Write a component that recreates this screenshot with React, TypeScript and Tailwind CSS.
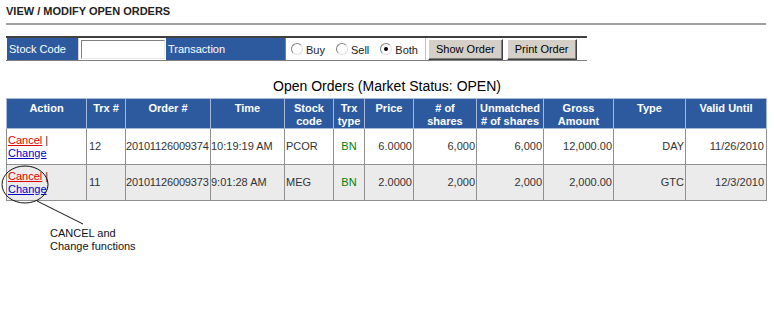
import React from 'react';

interface OrderRow {
  trx: string;
  order: string;
  time: string;
  stock: string;
  trxType: string;
  price: string;
  shares: string;
  unmatched: string;
  gross: string;
  type: string;
  validUntil: string;
}

const rows: OrderRow[] = [
  {
    trx: '12',
    order: '20101126009374',
    time: '10:19:19 AM',
    stock: 'PCOR',
    trxType: 'BN',
    price: '6.0000',
    shares: '6,000',
    unmatched: '6,000',
    gross: '12,000.00',
    type: 'DAY',
    validUntil: '11/26/2010',
  },
  {
    trx: '11',
    order: '20101126009373',
    time: '9:01:28 AM',
    stock: 'MEG',
    trxType: 'BN',
    price: '2.0000',
    shares: '2,000',
    unmatched: '2,000',
    gross: '2,000.00',
    type: 'GTC',
    validUntil: '12/3/2010',
  },
];

const headers: string[][] = [
  ['Action'],
  ['Trx #'],
  ['Order #'],
  ['Time'],
  ['Stock', 'code'],
  ['Trx', 'type'],
  ['Price'],
  ['# of', 'shares'],
  ['Unmatched', '# of shares'],
  ['Gross', 'Amount'],
  ['Type'],
  ['Valid Until'],
];

const colWidths = [80, 39, 85, 74, 49, 31, 49, 63, 67, 70, 72, 81];

const Radio = ({ label, checked }: { label: string; checked?: boolean }) => (
  <label className="flex items-center gap-[3px]">
    <span className="flex h-[12px] w-[12px] items-center justify-center rounded-full border border-t-[#808080] border-l-[#808080] border-b-[#e0e0e0] border-r-[#e0e0e0] bg-white">
      {checked && <span className="h-[4px] w-[4px] rounded-full bg-black" />}
    </span>
    <span className="pt-[3px]">{label}</span>
  </label>
);

const Button = ({ children }: { children: React.ReactNode }) => (
  <button className="h-[21px] border border-t-white border-l-white border-b-[#404040] border-r-[#404040] bg-[#d4d0c8] px-[7px] text-[11px] leading-none text-black shadow-[inset_-1px_-1px_0_#808080]">
    {children}
  </button>
);

export default function App() {
  return (
    <div
      className="relative min-h-[313px] w-[774px] bg-white px-[6px] text-[11px] text-[#333]"
      style={{ fontFamily: '"Liberation Sans", Arial, sans-serif' }}
    >
      {/* page title */}
      <div className="pt-[5px] text-[11px] font-bold leading-[13px] text-[#222]">VIEW / MODIFY OPEN ORDERS</div>
      <div className="mt-[5px] h-[2px] w-[760px] bg-[#a0a0a0]" />

      {/* filter bar */}
      <div className="mt-[11px] flex h-[25px] w-[581px] border-t-2 border-b border-t-[#404040] border-b-[#808080]">
        <div className="flex w-[72px] items-center border-l border-white bg-[#2d5a9f] pl-[2px] text-white">Stock Code</div>
        <div className="flex w-[87px] items-center border-l border-[#d0d0d0] bg-white px-[2px]">
          <input
            className="h-[19px] w-[84px] border border-t-[#808080] border-l-[#808080] border-b-[#e8e8e8] border-r-[#e8e8e8] bg-white outline-none"
            type="text"
          />
        </div>
        <div className="flex w-[120px] items-center border-l border-white bg-[#2d5a9f] pl-[2px] text-white">Transaction</div>
        <div className="flex w-[140px] items-center gap-[11px] border-l border-[#808080] bg-white pl-[5px] text-[#222]">
          <Radio label="Buy" />
          <Radio label="Sell" />
          <Radio label="Both" checked />
        </div>
        <div className="flex items-center gap-[4px] border-l border-[#c0c0c0] pl-[2px]">
          <Button>Show Order</Button>
          <Button>Print Order</Button>
        </div>
      </div>

      {/* orders table */}
      <div className="mt-[17px] text-center text-[14px] leading-[17px] text-black">Open Orders (Market Status: OPEN)</div>
      <table className="mt-[3px] w-[760px] table-fixed border-collapse border border-[#505050]">
        <colgroup>
          {colWidths.map((w, i) => (
            <col key={i} style={{ width: w }} />
          ))}
        </colgroup>
        <thead>
          <tr className="h-[30px] bg-[#2d5a9f]">
            {headers.map((h, i) => (
              <th
                key={i}
                className="border border-[#a8b8d8] px-[1px] pt-[3px] align-top text-[11px] font-bold leading-[13px] text-white"
              >
                {h.map((line, j) => (
                  <div key={j} className="whitespace-nowrap">
                    {line}
                  </div>
                ))}
              </th>
            ))}
          </tr>
        </thead>
        <tbody>
          {rows.map((r, i) => (
            <tr key={r.trx} className={i === 0 ? 'h-[36px] bg-white' : 'h-[36px] bg-[#ebebeb]'}>
              <td className="border border-[#909090] pl-[1px] leading-[13px]">
                <a className="text-[#e00000] underline">Cancel</a> |
                <br />
                <a className="text-[#0000cc] underline">Change</a>
              </td>
              <td className="border border-[#909090] pl-[2px]">{r.trx}</td>
              <td className="border border-[#909090] whitespace-nowrap tracking-[-0.15px]">{r.order}</td>
              <td className="border border-[#909090] whitespace-nowrap">{r.time}</td>
              <td className="border border-[#909090] pl-[1px]">{r.stock}</td>
              <td className="border border-[#909090] text-center text-[#008000]">{r.trxType}</td>
              <td className="border border-[#909090] pr-[1px] text-right">{r.price}</td>
              <td className="border border-[#909090] pr-[1px] text-right">{r.shares}</td>
              <td className="border border-[#909090] pr-[1px] text-right">{r.unmatched}</td>
              <td className="border border-[#909090] pr-[1px] text-right">{r.gross}</td>
              <td className="border border-[#909090] pr-[1px] text-right">{r.type}</td>
              <td className="border border-[#909090] pr-[2px] text-right">{r.validUntil}</td>
            </tr>
          ))}
        </tbody>
      </table>

      {/* callout note */}
      <div className="ml-[44px] mt-[26px] leading-[13px] text-[#111]">
        CANCEL and
        <br />
        Change functions
      </div>

      {/* callout circle over the action links */}
      <svg className="pointer-events-none absolute left-0 top-0" width="774" height="313">
        <ellipse cx="25" cy="184.5" rx="23" ry="18.5" fill="none" stroke="#111" strokeWidth="1" />
        <line x1="37" y1="201" x2="83" y2="224" stroke="#111" strokeWidth="1" />
      </svg>
    </div>
  );
}
